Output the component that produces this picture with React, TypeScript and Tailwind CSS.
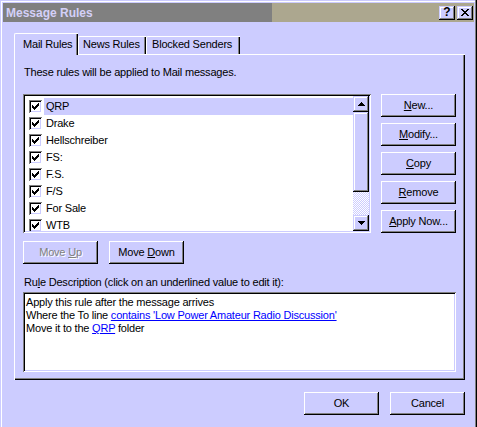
import React from "react";

const raised =
  "shadow-[inset_-1px_-1px_0_#000,inset_1px_1px_0_#fff,inset_-2px_-2px_0_#808080]";
const raised2 =
  "shadow-[inset_-1px_-1px_0_#000,inset_1px_1px_0_#ccccff,inset_-2px_-2px_0_#808080,inset_2px_2px_0_#fff]";
const sunken =
  "shadow-[inset_1px_1px_0_#808080,inset_-1px_-1px_0_#fff,inset_2px_2px_0_#000,inset_-2px_-2px_0_#ccccff]";

function Check() {
  const cols = [2, 3, 4, 3, 2, 1, 0];
  return (
    <div className={`w-[13px] h-[13px] bg-white relative shrink-0 ${sunken}`}>
      <svg width="7" height="7" viewBox="0 0 7 7" className="absolute left-[3px] top-[3px]" shapeRendering="crispEdges">
        {cols.map((r, i) => (
          <rect key={i} x={i} y={r} width={1} height={3} fill="#000" />
        ))}
      </svg>
    </div>
  );
}

function Btn({ children, w = "w-[75px]", disabled = false }: { children: React.ReactNode; w?: string; disabled?: boolean }) {
  return (
    <div
      className={`${w} h-[23px] flex items-center justify-center bg-[#ccccff] ${raised} ${
        disabled ? "text-[#808080] [text-shadow:1px_1px_0_#fff]" : "text-black"
      }`}
    >
      <span className="leading-[13px]">{children}</span>
    </div>
  );
}

const items = ["QRP", "Drake", "Hellschreiber", "FS:", "F.S.", "F/S", "For Sale", "WTB"];

export default function App() {
  return (
    <div
      className="w-[477px] h-[427px] bg-[#ccccff] overflow-hidden flex flex-col text-[11px] tracking-[-0.2px] text-black shadow-[inset_-1px_0_0_#000,inset_-2px_0_0_#808080,inset_1px_1px_0_#ccccff,inset_2px_2px_0_#fff]"
      style={{ fontFamily: '"Liberation Sans", Arial, sans-serif' }}
    >
      {/* Title bar */}
      <div className="mt-[3px] ml-[3px] mr-[3px] h-[19px] flex items-center bg-[linear-gradient(to_right,#808080_269px,#aca78f_269px)]">
        <span className="ml-[3px] font-bold text-[12px] tracking-normal text-[#d4d0f8] leading-[14px]">Message Rules</span>
        <div className="ml-auto flex gap-[2px] mr-[1px]">
          <div className={`w-[16px] h-[14px] bg-[#ccccff] flex items-center justify-center ${raised2}`}>
            <span className="font-bold text-[12px] leading-[12px] tracking-normal -mt-[1px]">?</span>
          </div>
          <div className={`w-[16px] h-[14px] bg-[#ccccff] flex items-center justify-center ${raised2}`}>
            <svg width="8" height="7" viewBox="0 0 8 7" shapeRendering="crispEdges" className="-mt-[1px]">
              <path d="M0 0h2v1H0zM6 0h2v1H6zM1 1h2v1H1zM5 1h2v1H5zM2 2h4v1H2zM3 3h2v1H3zM2 4h4v1H2zM1 5h2v1H1zM5 5h2v1H5zM0 6h2v1H0zM6 6h2v1H6z" fill="#000" />
            </svg>
          </div>
        </div>
      </div>

      {/* Tabs */}
      <div className="ml-[14px] mt-[11px] flex items-end h-[21px] relative z-10">
        <div className="w-[64px] h-[22px] -mb-[1px] bg-[#ccccff] border-l border-t border-white rounded-tl-[2px] shadow-[inset_-1px_0_0_#000,inset_-2px_0_0_#808080] pl-[8px] pt-[4px]">
          <span className="leading-[13px] block">Mail Rules</span>
        </div>
        <div className="w-[68px] h-[18px] bg-[#ccccff] border-l border-t border-white rounded-tl-[2px] shadow-[inset_-1px_0_0_#000,inset_-2px_0_0_#808080] pl-[4px] pt-[1px]">
          <span className="leading-[13px] block">News Rules</span>
        </div>
        <div className="w-[94px] h-[18px] bg-[#ccccff] border-l border-t border-white rounded-tl-[2px] shadow-[inset_-1px_0_0_#000,inset_-2px_0_0_#808080] pl-[5px] pt-[1px]">
          <span className="leading-[13px] block">Blocked Senders</span>
        </div>
      </div>

      {/* Panel */}
      <div className="ml-[14px] w-[451px] h-[326px] border-l border-t border-white shadow-[inset_-1px_-1px_0_#000,inset_-2px_-2px_0_#808080] flex flex-col pl-[8px]">
        <div className="mt-[11px] ml-[1px] leading-[13px]">These rules will be applied to Mail messages.</div>

        <div className="mt-[15px] flex gap-[10px]">
          {/* List box */}
          <div className={`w-[348px] h-[139px] bg-white p-[2px] flex ${sunken}`}>
            <div className="flex-1 overflow-hidden pt-[2px]">
              {items.map((it, i) => (
                <div key={it} className="h-[17px] flex items-center pl-[4px]">
                  <Check />
                  <div className={`ml-[2px] flex-1 h-[17px] flex items-center pl-[2px] ${i === 0 ? "bg-[#ccccff]" : ""}`}>
                    <span className="leading-[13px]">{it}</span>
                  </div>
                </div>
              ))}
            </div>
            {/* Scrollbar */}
            <div className="w-[16px] flex flex-col">
              <div className={`h-[16px] bg-[#ccccff] flex items-center justify-center ${raised2}`}>
                <svg width="7" height="4" viewBox="0 0 7 4" shapeRendering="crispEdges">
                  <path d="M3 0h1v1H3zM2 1h3v1H2zM1 2h5v1H1zM0 3h7v1H0z" fill="#000" />
                </svg>
              </div>
              <div className={`h-[80px] bg-[#ccccff] ${raised2}`} />
              <div className="flex-1 bg-[repeating-conic-gradient(#ffffff_0_25%,#ccccff_0_50%)] bg-[length:2px_2px]" />
              <div className={`h-[16px] bg-[#ccccff] flex items-center justify-center ${raised2}`}>
                <svg width="7" height="4" viewBox="0 0 7 4" shapeRendering="crispEdges">
                  <path d="M0 0h7v1H0zM1 1h5v1H1zM2 2h3v1H2zM3 3h1v1H3z" fill="#000" />
                </svg>
              </div>
            </div>
          </div>

          {/* Right buttons */}
          <div className="flex flex-col gap-[6px]">
            <Btn><span className="underline">N</span>ew...</Btn>
            <Btn><span className="underline">M</span>odify...</Btn>
            <Btn><span className="underline">C</span>opy</Btn>
            <Btn><span className="underline">R</span>emove</Btn>
            <Btn><span className="underline">A</span>pply Now...</Btn>
          </div>
        </div>

        <div className="mt-[8px] flex gap-[11px]">
          <Btn disabled>Move <span className="underline">U</span>p</Btn>
          <Btn>Move <span className="underline">D</span>own</Btn>
        </div>

        <div className="mt-[12px] ml-[1px] leading-[13px]">
          Ru<span className="underline">l</span>e Description (click on an underlined value to edit it):
        </div>

        <div className={`mt-[3px] w-[433px] h-[80px] bg-white pt-[4px] pl-[3px] ${sunken}`}>
          <div className="leading-[13px]">Apply this rule after the message arrives</div>
          <div className="leading-[13px]">
            Where the To line <span className="text-[#0000ff] underline">contains 'Low Power Amateur Radio Discussion'</span>
          </div>
          <div className="leading-[13px]">
            Move it to the <span className="text-[#0000ff] underline">QRP</span> folder
          </div>
        </div>
      </div>

      {/* Bottom buttons */}
      <div className="mt-[12px] w-[465px] flex justify-end gap-[11px]">
        <Btn>OK</Btn>
        <Btn>Cancel</Btn>
      </div>
    </div>
  );
}
